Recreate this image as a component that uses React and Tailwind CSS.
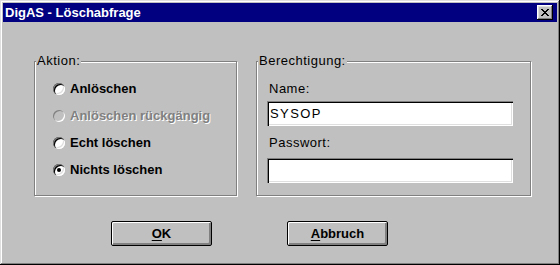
import React from "react";

const FONT = "font-['Liberation_Sans',Arial,sans-serif]";

function Radio({ label, checked = false, disabled = false }) {
  return (
    <div className="flex h-[27px] items-center gap-[5px]">
      <span
        className={
          disabled
            ? "flex h-[12px] w-[12px] items-center justify-center rounded-full bg-[#c0c0c0] shadow-[inset_1px_1px_0_#808080,inset_-1px_-1px_0_#fff]"
            : "flex h-[12px] w-[12px] items-center justify-center rounded-full bg-white shadow-[inset_1px_1px_0_#808080,inset_2px_2px_0_#000,inset_-1px_-1px_0_#fff,inset_-2px_-2px_0_#dfdfdf]"
        }
      >
        {checked && <span className="h-[4px] w-[4px] rounded-full bg-black" />}
      </span>
      <span
        className={
          disabled
            ? "font-bold text-[#808080] [text-shadow:1px_1px_0_#fff]"
            : "font-bold text-black"
        }
      >
        {label}
      </span>
    </div>
  );
}

function Group({ title, width, children }) {
  return (
    <div
      className={`relative h-[135px] border border-[#808080] shadow-[1px_1px_0_#fff,inset_1px_1px_0_#fff] ${width}`}
    >
      <span className="absolute left-[1px] top-[-8px] bg-[#c0c0c0] px-[1px] leading-[13px] tracking-[0.5px]">
        {title}
      </span>
      {children}
    </div>
  );
}

function Field({ value = "" }) {
  return (
    <div className="flex h-[25px] w-[246px] items-center bg-white pl-[3px] tracking-[1.4px] shadow-[inset_1px_1px_0_#808080,inset_2px_2px_0_#000,inset_-1px_-1px_0_#fff,inset_-2px_-2px_0_#dfdfdf]">
      {value}
    </div>
  );
}

function DlgButton({ children }) {
  return (
    <button className="flex h-[25px] w-[101px] items-center justify-center rounded-[2px] border border-black bg-[#c0c0c0] font-bold shadow-[inset_1px_1px_0_#fff,inset_-1px_-1px_0_#808080,inset_-2px_-2px_0_#808080]">
      {children}
    </button>
  );
}

export default function App() {
  return (
    <div
      className={`flex h-[265px] w-[560px] flex-col bg-[#c0c0c0] p-[3px] text-[13px] text-black ${FONT} shadow-[inset_-1px_-1px_0_#000,inset_1px_1px_0_#dfdfdf,inset_-2px_-2px_0_#808080,inset_2px_2px_0_#fff]`}
    >
      {/* title bar */}
      <div className="flex h-[19px] items-center justify-between bg-[#000080] pl-[2px] pr-[4px]">
        <span className="font-bold leading-[19px] text-white">DigAS - Löschabfrage</span>
        <button className="flex h-[15px] w-[16px] items-center justify-center bg-[#c0c0c0] shadow-[inset_-1px_-1px_0_#000,inset_1px_1px_0_#fff,inset_-2px_-2px_0_#808080,inset_2px_2px_0_#dfdfdf]">
          <svg width="8" height="7" viewBox="0 0 8 7">
            <path d="M0 0h2v1h1v1h2v-1h1v-1h2v1h-1v1h-1v1h-1v1h1v1h1v1h1v1h-2v-1h-1v-1h-2v1h-1v1h-2v-1h1v-1h1v-1h1v-1h-1v-1h-1v-1h-1z" fill="#000" />
          </svg>
        </button>
      </div>

      {/* group boxes */}
      <div className="mt-[39px] flex gap-[19px] pl-[31px]">
        <Group title="Aktion:" width="w-[203px]">
          <div className="flex flex-col pl-[18px] pt-[13px]">
            <Radio label="Anlöschen" />
            <Radio label="Anlöschen rückgängig" disabled />
            <Radio label="Echt löschen" />
            <Radio label="Nichts löschen" checked />
          </div>
        </Group>

        <Group title="Berechtigung:" width="w-[275px]">
          <div className="flex flex-col pl-[10px] pt-[17px] tracking-[0.5px]">
            <div className="h-[19px] pl-[2px] leading-[19px]">Name:</div>
            <div className="mt-[3px]">
              <Field value="SYSOP" />
            </div>
            <div className="mt-[7px] h-[19px] pl-[2px] leading-[19px]">Passwort:</div>
            <div className="mt-[6px]">
              <Field />
            </div>
          </div>
        </Group>
      </div>

      {/* buttons */}
      <div className="mt-[25px] flex gap-[75px] pl-[108px]">
        <DlgButton>
          <span className="underline underline-offset-2">O</span>K
        </DlgButton>
        <DlgButton>
          <span className="underline underline-offset-2">A</span>bbruch
        </DlgButton>
      </div>
    </div>
  );
}
